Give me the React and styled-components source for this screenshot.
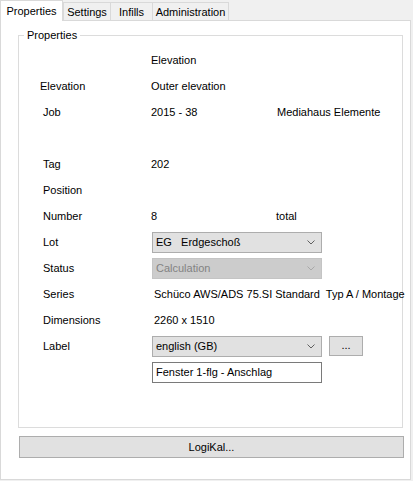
import styled, { createGlobalStyle } from "styled-components";

const GlobalStyle = createGlobalStyle`
  html, body {
    margin: 0;
    padding: 0;
    background: #f0f0f0;
  }
  body {
    font-family: "Liberation Sans", Arial, sans-serif;
    font-size: 11px;
    color: #000;
  }
`;

const Window = styled.div`
  width: 413px;
  height: 481px;
  display: flex;
  flex-direction: column;
  background: #f0f0f0;
`;

const TabStrip = styled.div`
  height: 20px;
  display: flex;
  align-items: flex-end;
  position: relative;
  z-index: 1;
`;

const Tab = styled.div`
  box-sizing: border-box;
  width: ${(p) => p.$width}px;
  height: ${(p) => (p.$active ? 21 : 18)}px;
  margin-bottom: ${(p) => (p.$active ? -1 : 0)}px;
  margin-left: ${(p) => (p.$first ? 0 : -1)}px;
  border: 1px solid #d9d9d9;
  border-bottom: none;
  background: ${(p) => (p.$active ? "#fff" : "#f0f0f0")};
  display: flex;
  align-items: center;
  justify-content: center;
  padding-bottom: ${(p) => (p.$active ? 1 : 0)}px;
  white-space: nowrap;
`;

const Panel = styled.div`
  box-sizing: border-box;
  width: 411px;
  height: 460px;
  background: #fff;
  border: 1px solid #d9d9d9;
  padding: 7px 0 0 17px;
`;

const GroupBox = styled.fieldset`
  box-sizing: border-box;
  width: 385px;
  height: 400px;
  margin: 0;
  padding: 0;
  border: 1px solid #dcdcdc;
  min-width: 0;
`;

const Legend = styled.legend`
  margin-left: 5px;
  padding: 0 3px;
  line-height: 14px;
`;

const Form = styled.div`
  display: flex;
  flex-direction: column;
  padding: 5px 0 0 24px;
`;

const Row = styled.div`
  display: grid;
  grid-template-columns: 108px 125px 1fr;
  height: 26px;
  align-items: center;
`;

const Label = styled.span`
  grid-column: 1;
  margin-left: ${(p) => p.$shift || 0}px;
  white-space: nowrap;
`;

const Value = styled.span`
  grid-column: ${(p) => (p.$wide ? "2 / 4" : "2")};
  padding-left: ${(p) => p.$indent || 0}px;
  white-space: pre;
  overflow: hidden;
  ${(p) => (p.$wide ? "width: 253px;" : "")}
`;

const Extra = styled.span`
  grid-column: 3;
  margin-left: ${(p) => p.$shift || 0}px;
  white-space: nowrap;
`;

const Controls = styled.div`
  grid-column: 2 / 4;
  display: flex;
  align-items: center;
  gap: 7px;
  margin-left: 1px;
`;

const Combo = styled.div`
  box-sizing: border-box;
  width: 170px;
  height: 21px;
  display: flex;
  align-items: center;
  justify-content: space-between;
  padding: 0 6px 0 3px;
  background: ${(p) => (p.$disabled ? "#cccccc" : "#e1e1e1")};
  border: 1px solid ${(p) => (p.$disabled ? "#c4c4c4" : "#adadad")};
  color: ${(p) => (p.$disabled ? "#838383" : "#000")};
  white-space: pre;
`;

const TextBox = styled.div`
  box-sizing: border-box;
  width: 170px;
  height: 21px;
  display: flex;
  align-items: center;
  padding-left: 3px;
  background: #fff;
  border: 1px solid #7a7a7a;
`;

const SmallButton = styled.div`
  box-sizing: border-box;
  width: 34px;
  height: 20px;
  display: flex;
  align-items: center;
  justify-content: center;
  background: #e1e1e1;
  border: 1px solid #adadad;
  padding-bottom: 2px;
`;

const WideButton = styled.div`
  box-sizing: border-box;
  width: 385px;
  height: 22px;
  margin: 8px 0 0 1px;
  display: flex;
  align-items: center;
  justify-content: center;
  background: #e1e1e1;
  border: 1px solid #adadad;
`;

const Chevron = ({ disabled }) => (
  <svg width="8" height="5" viewBox="0 0 8 5">
    <path
      d="M0.5 0.5 L4 4 L7.5 0.5"
      fill="none"
      stroke={disabled ? "#a8a8a8" : "#606060"}
      strokeWidth="1"
    />
  </svg>
);

const tabs = [
  { label: "Properties", width: 63, active: true },
  { label: "Settings", width: 48 },
  { label: "Infills", width: 43 },
  { label: "Administration", width: 77 },
];

export default function App() {
  return (
    <Window>
      <GlobalStyle />
      <TabStrip>
        {tabs.map((t, i) => (
          <Tab key={t.label} $width={t.width} $active={t.active} $first={i < 2}>
            {t.label}
          </Tab>
        ))}
      </TabStrip>
      <Panel>
        <GroupBox>
          <Legend>Properties</Legend>
          <Form>
            <Row>
              <Value>Elevation</Value>
            </Row>
            <Row>
              <Label $shift={-3}>Elevation</Label>
              <Value>Outer elevation</Value>
            </Row>
            <Row>
              <Label>Job</Label>
              <Value>2015 - 38</Value>
              <Extra $shift={1}>Mediahaus Elemente</Extra>
            </Row>
            <Row />
            <Row>
              <Label>Tag</Label>
              <Value>202</Value>
            </Row>
            <Row>
              <Label>Position</Label>
            </Row>
            <Row>
              <Label>Number</Label>
              <Value>8</Value>
              <Extra>total</Extra>
            </Row>
            <Row>
              <Label>Lot</Label>
              <Controls>
                <Combo>
                  {"EG   Erdgeschoß"}
                  <Chevron />
                </Combo>
              </Controls>
            </Row>
            <Row>
              <Label>Status</Label>
              <Controls>
                <Combo $disabled>
                  Calculation
                  <Chevron disabled />
                </Combo>
              </Controls>
            </Row>
            <Row>
              <Label>Series</Label>
              <Value $wide $indent={3}>
                {"Schüco AWS/ADS 75.SI Standard  Typ A / Montage"}
              </Value>
            </Row>
            <Row>
              <Label>Dimensions</Label>
              <Value $indent={3}>2260 x 1510</Value>
            </Row>
            <Row>
              <Label>Label</Label>
              <Controls>
                <Combo>
                  english (GB)
                  <Chevron />
                </Combo>
                <SmallButton>...</SmallButton>
              </Controls>
            </Row>
            <Row>
              <Controls>
                <TextBox>Fenster 1-flg - Anschlag</TextBox>
              </Controls>
            </Row>
          </Form>
        </GroupBox>
        <WideButton>LogiKal...</WideButton>
      </Panel>
    </Window>
  );
}
